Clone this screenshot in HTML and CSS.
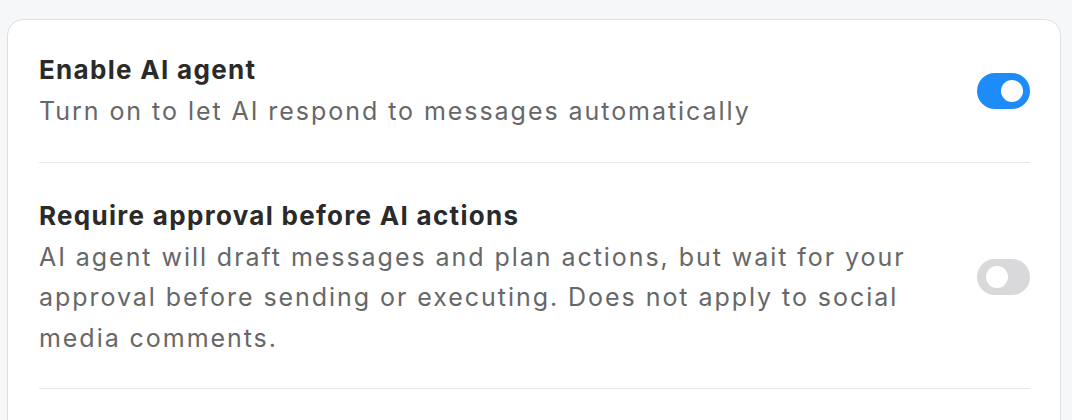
FILE: index.html
```html
<!DOCTYPE html>
<html>
<head>
<meta charset="utf-8">
<link rel="stylesheet" href="styles.css">
</head>
<body>
<div class="card">
  <div class="row">
    <div class="text">
      <div class="title">Enable AI agent</div>
      <div class="desc">Turn on to let AI respond to messages automatically</div>
    </div>
    <div class="toggle on"><span class="knob"></span></div>
  </div>
  <div class="row">
    <div class="text">
      <div class="title">Require approval before AI actions</div>
      <div class="desc">AI agent will draft messages and plan actions, but wait for your approval before sending or executing. Does not apply to social media comments.</div>
    </div>
    <div class="toggle"><span class="knob"></span></div>
  </div>
</div>
</body>
</html>
```
FILE: styles.css
```css
html, body {
  margin: 0;
  padding: 0;
  background: #f6f7f9;
}
body {
  padding: 19px 11px 0 7px;
  font-family: Inter, "Noto Sans", sans-serif;
  height: 420px;
  box-sizing: border-box;
  overflow: hidden;
}
.card {
  background: #fff;
  border: 1px solid #dedfe1;
  border-radius: 16px;
  padding: 0 30px 0 31px;
  height: 600px;
}
.row {
  display: flex;
  align-items: center;
  justify-content: space-between;
  gap: 48px;
  padding: 33px 0 30px;
  border-bottom: 1px solid #e6e7e9;
}
.row:first-child {
  padding-top: 30px;
  padding-bottom: 31px;
}
.text {
  flex: 1;
  max-width: 900px;
}
.title {
  font-size: 26px;
  font-weight: 700;
  color: #2a2a2a;
  line-height: 40.5px;
  letter-spacing: 1.3px;
}
.desc {
  font-size: 25px;
  color: #666768;
  line-height: 40.5px;
  letter-spacing: 1.95px;
}
.toggle {
  flex: none;
  width: 53px;
  height: 36px;
  border-radius: 18px;
  background: #d9d9db;
  display: flex;
  align-items: center;
  padding: 0 7px 0 9px;
  box-sizing: border-box;
}
.toggle.on {
  background: #1d8cf8;
  justify-content: flex-end;
}
.knob {
  width: 22px;
  height: 22px;
  border-radius: 50%;
  background: #fff;
}
```
